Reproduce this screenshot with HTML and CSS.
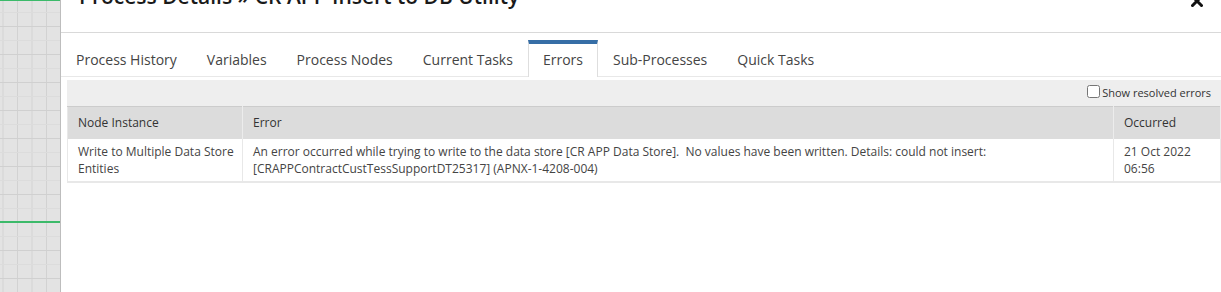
FILE: index.html
```html
<!DOCTYPE html>
<html lang="en">
<head>
	<meta charset="UTF-8" />
	<title>Process Details</title>
	<link rel="stylesheet" href="styles.css">
</head>
<body>
	<!-- designer canvas behind the dialog -->
	<div class="canvas">
		<div class="flow-line top"></div>
		<div class="flow-line mid"></div>
	</div>

	<div class="modal">
		<div class="modal-header">
			<h2 class="modal-title">Process Details &raquo; CR APP Insert to DB Utility</h2>
			<a class="modal-close" href="#" title="Close">
				<svg width="12" height="12" viewBox="0 0 12 12">
					<path d="M1.5 1.5 L10.5 10.5 M10.5 1.5 L1.5 10.5" stroke="#111" stroke-width="3" stroke-linecap="square" fill="none" />
				</svg>
			</a>
		</div>

		<ul class="tabs">
			<li><a href="#">Process History</a></li>
			<li><a href="#">Variables</a></li>
			<li><a href="#">Process Nodes</a></li>
			<li><a href="#">Current Tasks</a></li>
			<li class="active"><a href="#">Errors</a></li>
			<li><a href="#">Sub-Processes</a></li>
			<li><a href="#">Quick Tasks</a></li>
		</ul>

		<div class="panel">
			<div class="toolbar">
				<label><input type="checkbox"> Show resolved errors</label>
			</div>
			<table class="grid">
				<thead>
					<tr>
						<th class="col-node">Node Instance</th>
						<th>Error</th>
						<th class="col-date">Occurred</th>
					</tr>
				</thead>
				<tbody>
					<tr>
						<td class="col-node">Write to Multiple Data Store Entities</td>
						<td>An error occurred while trying to write to the data store [CR APP Data Store].&nbsp; No values have been written. Details: could not insert: [CRAPPContractCustTessSupportDT25317] (APNX-1-4208-004)</td>
						<td>21 Oct 2022 06:56</td>
					</tr>
				</tbody>
			</table>
		</div>
	</div>
</body>
</html>
```

FILE: styles.css
```css
html,
body {
	margin: 0;
	height: 100%;
	overflow: hidden;
}

body {
	display: flex;
	font-family: "Open Sans", "Liberation Sans", sans-serif;
	background-color: #fff;
}

.canvas {
	position: relative;
	width: 60px;
	flex: none;
	background-color: #e3e3e3;
	background-image:
		linear-gradient(to bottom, #d0d0d0 1px, transparent 1px),
		linear-gradient(to bottom, #dcdcdc 1px, transparent 1px),
		linear-gradient(to right, #d2d2d2 1px, transparent 1px);
	background-size: 100% 28px, 100% 14px, 14.5px 100%;
	background-position: 0 26px, 0 12px, 2.5px 0;
}

.flow-line {
	position: absolute;
	left: 0;
	right: 0;
	background-color: #3cba6a;
}

.flow-line.top {
	top: 0;
	height: 1px;
}

.flow-line.mid {
	top: 221px;
	height: 2px;
}

.modal {
	flex: 1;
	min-width: 0;
	background-color: #fff;
	border-left: 1px solid #bdbdbd;
}

.modal-header {
	position: relative;
	display: flow-root;
	height: 32px;
	border-bottom: 1px solid #d9d9d9;
}

.modal-title {
	margin: -18px 0 0 18px;
	font-size: 21px;
	font-weight: 600;
	line-height: 28px;
	color: #1a1a1a;
	white-space: nowrap;
}

.modal-close {
	position: absolute;
	right: 18px;
	top: -5px;
	display: block;
	width: 12px;
	height: 12px;
}

.modal-close svg {
	display: block;
}

.tabs {
	display: flex;
	list-style: none;
	margin: 0;
	padding: 7px 0 0 0;
	border-bottom: 1px solid #e8e8e8;
}

.tabs li {
	border: 1px solid transparent;
	border-top: 4px solid transparent;
	border-bottom: none;
	margin-bottom: -1px;
}

.tabs li a {
	display: block;
	padding: 0 14px;
	height: 32px;
	line-height: 32px;
	font-size: 14px;
	color: #444;
	text-decoration: none;
}

.tabs li.active {
	border-color: #dedede;
	border-top-color: #366ea6;
	background-color: #fff;
	height: 33px;
}

.panel {
	padding: 3px 0 0 6px;
}

.toolbar {
	height: 26px;
	background-color: #eeeeee;
	text-align: right;
	padding-right: 10px;
	font-size: 11px;
	color: #333;
	line-height: 26px;
}

.toolbar label {
	display: inline-flex;
	align-items: center;
	gap: 2px;
}

.toolbar input {
	margin: 0;
	width: 13px;
	height: 13px;
	position: relative;
	top: -2px;
}

.grid {
	width: 100%;
	border-collapse: collapse;
	font-size: 12px;
	border-top: 1px solid #cccccc;
	border-left: 1px solid #e8e8e8;
	border-bottom: 2px solid #e8e8e8;
}

.grid th {
	background-color: #dcdcdc;
	color: #333;
	font-weight: normal;
	text-align: left;
	padding: 8px 10px;
	line-height: 16px;
	border-right: 1px solid #ececec;
}

.grid td {
	color: #444;
	padding: 4px 10px;
	line-height: 17px;
	vertical-align: top;
	border-right: 1px solid #e8e8e8;
}

.grid .col-node {
	width: 160px;
	padding-right: 4px;
}

.col-date {
	width: 86px;
}
```
